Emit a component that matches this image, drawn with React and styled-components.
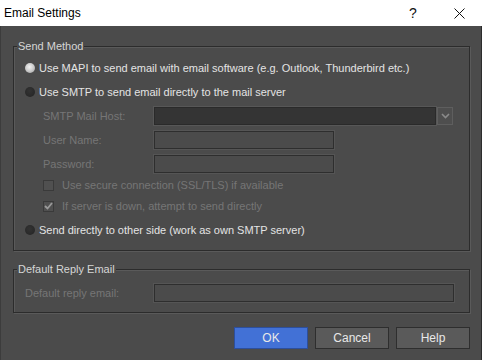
import React from 'react';
import styled, { createGlobalStyle, css } from 'styled-components';

const GlobalStyle = createGlobalStyle`
  html, body {
    margin: 0;
    padding: 0;
    background: #4b4b4b;
  }
  * {
    box-sizing: border-box;
  }
`;

const App = () => {
  return (
    <>
      <GlobalStyle />
      <Window>
        <TitleBar>
          <Title>Email Settings</Title>
          <TitleButtons>
            <TitleButton>?</TitleButton>
            <TitleButton>
              <svg width="11" height="11" viewBox="0 0 11 11">
                <path d="M0.5 0.5 L10.5 10.5 M10.5 0.5 L0.5 10.5" stroke="#111" strokeWidth="1" />
              </svg>
            </TitleButton>
          </TitleButtons>
        </TitleBar>

        <Body>
          <Group>
            <Legend>Send Method</Legend>
            <RadioRow>
              <Radio $checked />
              <Text>Use MAPI to send email with email software (e.g. Outlook, Thunderbird etc.)</Text>
            </RadioRow>
            <RadioRow $gap={4}>
              <Radio />
              <Text>Use SMTP to send email directly to the mail server</Text>
            </RadioRow>

            <FieldRow $gap={5} $indent={29}>
              <FieldLabel $width={111}>SMTP Mail Host:</FieldLabel>
              <Select>
                <SelectBox />
                <DropButton>
                  <svg width="9" height="6" viewBox="0 0 9 6">
                    <path d="M1 1 L4.5 4.5 L8 1" stroke="#8a8a8a" strokeWidth="1.6" fill="none" />
                  </svg>
                </DropButton>
              </Select>
            </FieldRow>
            <FieldRow $gap={6} $indent={29}>
              <FieldLabel $width={111}>User Name:</FieldLabel>
              <Input $width={180} />
            </FieldRow>
            <FieldRow $gap={6} $indent={29}>
              <FieldLabel $width={111}>Password:</FieldLabel>
              <Input $width={180} />
            </FieldRow>

            <CheckRow $gap={2}>
              <CheckBox />
              <Text $disabled>Use secure connection (SSL/TLS) if available</Text>
            </CheckRow>
            <CheckRow $gap={1}>
              <CheckBox>
                <svg width="9" height="8" viewBox="0 0 9 8">
                  <path d="M1 4 L3.5 6.5 L8 1" stroke="#9a9a9a" strokeWidth="1.8" fill="none" />
                </svg>
              </CheckBox>
              <Text $disabled>If server is down, attempt to send directly</Text>
            </CheckRow>

            <RadioRow $gap={4}>
              <Radio />
              <Text>Send directly to other side (work as own SMTP server)</Text>
            </RadioRow>
          </Group>

          <Group $top={18} $padTop={14}>
            <Legend>Default Reply Email</Legend>
            <FieldRow $indent={11}>
              <FieldLabel $width={129}>Default reply email:</FieldLabel>
              <Input $width={300} />
            </FieldRow>
          </Group>

          <ButtonBar>
            <Button $primary>OK</Button>
            <Button>Cancel</Button>
            <Button>Help</Button>
          </ButtonBar>
        </Body>
      </Window>
    </>
  );
};

export default App;

const font = css`
  font-family: "Segoe UI", "Liberation Sans", Arial, sans-serif;
  font-size: 11px;
`;

const Window = styled.div`
  width: 482px;
  height: 360px;
  background: #4b4b4b;
  border-left: 1px solid #3c3c3c;
  border-right: 1px solid #2c2c2c;
  display: flex;
  flex-direction: column;
  ${font};
`;

const TitleBar = styled.div`
  height: 26px;
  background: #ffffff;
  display: flex;
  align-items: center;
  justify-content: space-between;
  margin: 0 -1px;
`;

const Title = styled.div`
  padding-left: 4px;
  font-family: "Segoe UI", "Liberation Sans", Arial, sans-serif;
  font-size: 12px;
  color: #000;
`;

const TitleButtons = styled.div`
  display: flex;
  height: 100%;
`;

const TitleButton = styled.div`
  width: 46px;
  height: 100%;
  display: flex;
  align-items: center;
  justify-content: center;
  font-family: "Segoe UI", "Liberation Sans", Arial, sans-serif;
  font-size: 14px;
  color: #111;
`;

const Body = styled.div`
  flex: 1;
  display: flex;
  flex-direction: column;
  padding: 0 11px 0 12px;
`;

const Group = styled.div`
  position: relative;
  margin-top: ${(p) => p.$top ?? 20}px;
  padding: ${(p) => p.$padTop ?? 11}px 0 10px 0;
  border: 1px solid #2c2c2c;
  box-shadow: inset 1px 1px 0 #5a5a5a, 1px 1px 0 #5a5a5a;
  display: flex;
  flex-direction: column;
`;

const Legend = styled.div`
  position: absolute;
  top: -8px;
  left: 3px;
  padding: 0 1px;
  line-height: 15px;
  background: #4b4b4b;
  color: #d6d6d6;
`;

const Text = styled.span`
  color: ${(p) => (p.$disabled ? '#767676' : '#e4e4e4')};
  white-space: nowrap;
`;

const RadioRow = styled.div`
  height: 20px;
  margin-top: ${(p) => p.$gap ?? 0}px;
  padding-left: 11px;
  display: flex;
  align-items: center;
  gap: 4px;
`;

const Radio = styled.span`
  width: 10px;
  height: 10px;
  border-radius: 50%;
  flex-shrink: 0;
  background: ${(p) =>
    p.$checked
      ? 'radial-gradient(circle at 45% 40%, #f2f2f2 0%, #cfcfcf 45%, #9a9a9a 100%)'
      : 'radial-gradient(circle at 45% 40%, #333 0%, #2a2a2a 60%, #232323 100%)'};
`;

const FieldRow = styled.div`
  height: 18px;
  margin-top: ${(p) => p.$gap ?? 0}px;
  padding-left: ${(p) => p.$indent}px;
  display: flex;
  align-items: center;
`;

const FieldLabel = styled.span`
  width: ${(p) => p.$width}px;
  color: #767676;
  white-space: nowrap;
`;

const Input = styled.div`
  width: ${(p) => p.$width}px;
  height: 18px;
  border: 1px solid #2e2e2e;
  box-shadow: 0 0 0 1px #555;
  background: #4b4b4b;
`;

const Select = styled.div`
  display: flex;
  align-items: center;
  gap: 1px;
`;

const SelectBox = styled.div`
  width: 282px;
  height: 18px;
  border: 1px solid #2a2a2a;
  box-shadow: 0 0 0 1px #575757;
  background: #343434;
`;

const DropButton = styled.div`
  width: 16px;
  height: 18px;
  border: 1px solid #5e5e5e;
  background: #4e4e4e;
  display: flex;
  align-items: center;
  justify-content: center;
`;

const CheckRow = styled.div`
  height: 20px;
  margin-top: ${(p) => p.$gap ?? 0}px;
  padding-left: 29px;
  display: flex;
  align-items: center;
  gap: 8px;
`;

const CheckBox = styled.span`
  width: 11px;
  height: 11px;
  flex-shrink: 0;
  border: 1px solid #3a3a3a;
  background: #505050;
  display: flex;
  align-items: center;
  justify-content: center;
`;

const ButtonBar = styled.div`
  margin-top: 14px;
  display: flex;
  justify-content: flex-end;
  gap: 7px;
`;

const Button = styled.div`
  width: 74px;
  height: 22px;
  display: flex;
  align-items: center;
  justify-content: center;
  font-family: "Segoe UI", "Liberation Sans", Arial, sans-serif;
  font-size: 12px;
  color: #e8e8e8;
  border: 1px solid ${(p) => (p.$primary ? '#2d4f9c' : '#2e2e2e')};
  background: ${(p) => (p.$primary ? '#4271d6' : '#5a5a5a')};
`;
